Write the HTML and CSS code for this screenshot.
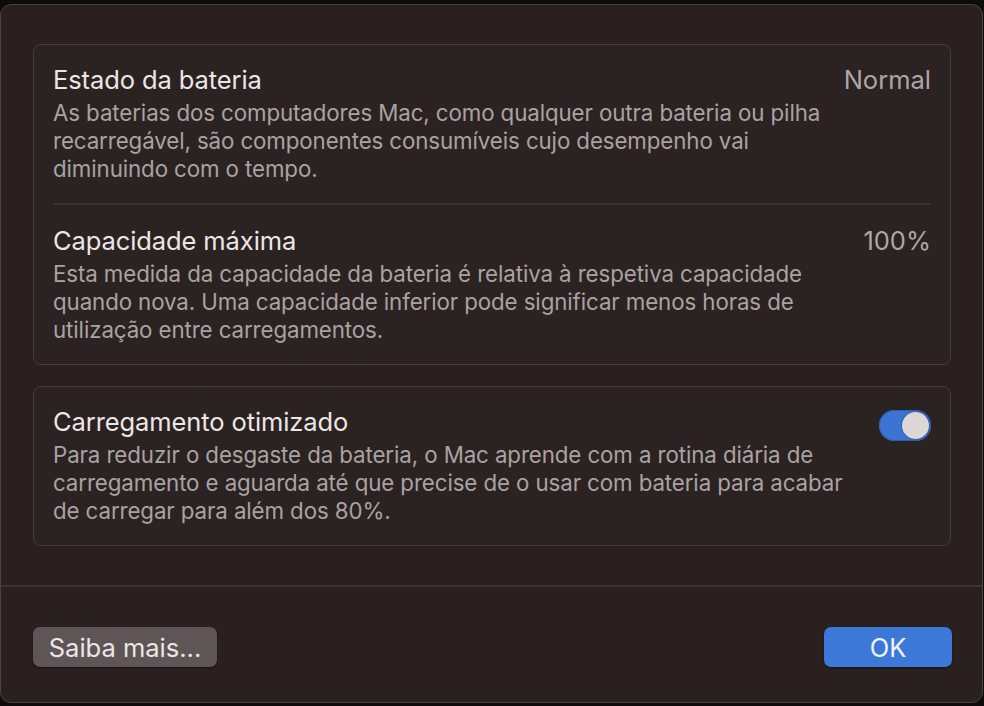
FILE: index.html
```html
<!DOCTYPE html>
<html lang="pt-PT">
<head>
    <meta charset="UTF-8">
    <meta name="viewport" content="width=device-width, initial-scale=1.0">
    <title>Estado da bateria</title>
    <link rel="stylesheet" href="styles.css">
</head>
<body>
    <div class="sheet">
        <div class="sheet-body">
            <div class="group">
                <div class="row">
                    <div class="row-text">
                        <h2>Estado da bateria</h2>
                        <p>As baterias dos computadores Mac, como qualquer outra bateria ou pilha recarregável, são componentes consumíveis cujo desempenho vai diminuindo com o tempo.</p>
                    </div>
                    <span class="value">Normal</span>
                </div>
                <div class="divider"></div>
                <div class="row">
                    <div class="row-text">
                        <h2>Capacidade máxima</h2>
                        <p>Esta medida da capacidade da bateria é relativa à respetiva capacidade quando nova. Uma capacidade inferior pode significar menos horas de utilização entre carregamentos.</p>
                    </div>
                    <span class="value">100%</span>
                </div>
            </div>

            <div class="group">
                <div class="row">
                    <div class="row-text">
                        <h2>Carregamento otimizado</h2>
                        <p>Para reduzir o desgaste da bateria, o Mac aprende com a rotina diária de carregamento e aguarda até que precise de o usar com bateria para acabar de carregar para além dos 80%.</p>
                    </div>
                    <div class="switch on"><span class="knob"></span></div>
                </div>
            </div>
        </div>

        <div class="sheet-footer">
            <button class="btn">Saiba mais...</button>
            <button class="btn primary">OK</button>
        </div>
    </div>
</body>
</html>
```

FILE: styles.css
```css
html, body {
    margin: 0;
    height: 100%;
}
body {
    background-color: #0d0b0b;
    font-family: Inter, "Noto Sans", "Liberation Sans", sans-serif;
    padding-top: 4px;
    box-sizing: border-box;
    overflow: hidden;
}
.sheet {
    height: 699px;
    width: 983px;
    background-color: #2a2020;
    border: 1px solid #4a4242;
    border-radius: 11px;
    box-sizing: border-box;
    display: flex;
    flex-direction: column;
}
.sheet-body {
    padding: 39px 31px 39px 32px;
    display: flex;
    flex-direction: column;
    gap: 21px;
    border-bottom: 2px solid #3b3333;
}
.group {
    border: 1px solid #453d3d;
    border-radius: 8px;
    background-color: #2b2222;
    padding: 0 19px;
}
.row {
    display: flex;
    justify-content: space-between;
    align-items: flex-start;
    padding: 19px 0 20px;
}
.row-text {
    width: 800px;
}
h2 {
    margin: 0 0 3px;
    font-size: 25.5px;
    font-weight: 400;
    line-height: 32px;
    color: #ede6e6;
    letter-spacing: -0.1px;
}
p {
    margin: 0;
    font-size: 22.3px;
    line-height: 28px;
    color: #aaa2a2;
    letter-spacing: -0.1px;
}
.value {
    font-size: 25.5px;
    line-height: 32px;
    color: #aea6a6;
}
.divider {
    height: 2px;
    margin-bottom: 1px;
    background-color: #3a3232;
}
.switch {
    flex: none;
    width: 52px;
    height: 31px;
    border-radius: 16px;
    background-color: #3c74d4;
    box-shadow: inset 0 0 0 1px #2e5fb4;
    position: relative;
    margin-top: 4px;
}
.knob {
    position: absolute;
    top: 2px;
    right: 2px;
    width: 27px;
    height: 27px;
    border-radius: 50%;
    background-color: #ddd8d8;
    box-shadow: 0 0 2px rgba(0, 0, 0, 0.5);
}
.sheet-footer {
    flex: 1;
    display: flex;
    justify-content: space-between;
    align-items: flex-start;
    padding: 40px 30px 0 32px;
}
.btn {
    font-family: inherit;
    font-size: 25.5px;
    height: 40px;
    padding: 0 12px;
    border: none;
    border-radius: 7px;
    background-color: #5e5656;
    color: #ece6e6;
    box-shadow: 0 1px 2px rgba(0, 0, 0, 0.5);
    width: 184px;
}
.btn.primary {
    background-color: #3b78d8;
    color: #f2f4fa;
    width: 128px;
}
```
